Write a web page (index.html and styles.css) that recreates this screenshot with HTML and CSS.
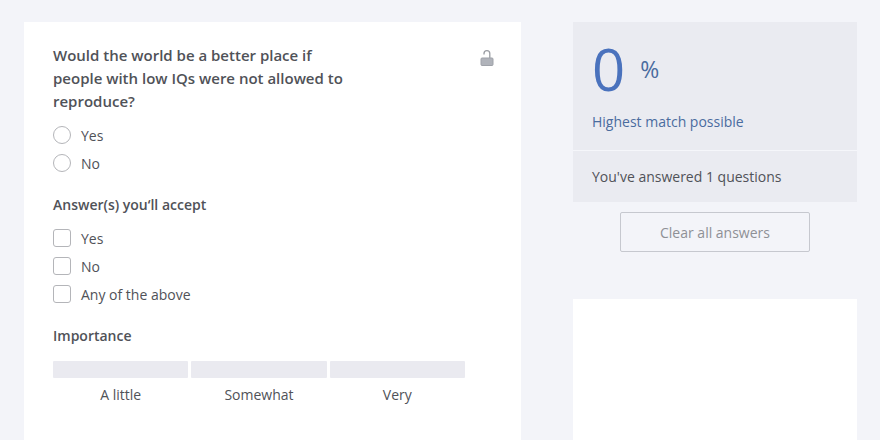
FILE: index.html
```html
<!DOCTYPE html>
<html lang="en">
<head>
    <meta charset="UTF-8">
    <meta name="viewport" content="width=device-width, initial-scale=1.0">
    <title>Questions</title>
    <link rel="stylesheet" href="styles.css">
</head>
<body>
    <div class="page">
        <form class="question-card">
            <div class="question-body">
                <fieldset>
                    <legend class="question-text">Would the world be a better place if people with low IQs were not allowed to reproduce?</legend>
                    <label class="option"><input type="radio" name="answer" value="yes">Yes</label>
                    <label class="option"><input type="radio" name="answer" value="no">No</label>
                </fieldset>

                <fieldset>
                    <legend>Answer(s) you‘ll accept</legend>
                    <label class="option"><input type="checkbox" name="accept" value="yes">Yes</label>
                    <label class="option"><input type="checkbox" name="accept" value="no">No</label>
                    <label class="option"><input type="checkbox" name="accept" value="any">Any of the above</label>
                </fieldset>

                <fieldset>
                    <legend>Importance</legend>
                    <div class="importance">
                        <label class="level"><input type="radio" name="importance" value="little">A little</label>
                        <label class="level"><input type="radio" name="importance" value="somewhat">Somewhat</label>
                        <label class="level"><input type="radio" name="importance" value="very">Very</label>
                    </div>
                </fieldset>
            </div>

            <button type="button" class="lock" aria-label="Answer publicly">
                <svg width="14" height="18" viewBox="0 0 14 18">
                    <path d="M4 5.500V4.500a2.800 2.800 0 0 1 5.800 0V9" fill="none" stroke="#9a9da3" stroke-width="1.300"/>
                    <rect x="1" y="9" width="12" height="7.500" rx="1" fill="#b0b3ba" stroke="#9fa2a9"/>
                </svg>
            </button>
        </form>

        <aside class="sidebar">
            <section class="match-card">
                <div class="match">
                    <div class="score"><span class="score-number">0</span><span class="score-percent">%</span></div>
                    <p class="match-label">Highest match possible</p>
                </div>
                <p class="answered">You've answered 1 questions</p>
            </section>
            <button type="button" class="clear-button">Clear all answers</button>
            <section class="panel"></section>
        </aside>
    </div>
</body>
</html>
```
FILE: styles.css
```css
* {
    box-sizing: border-box;
}

body {
    margin: 0;
    background-color: #f3f4f9;
    color: #505258;
    font-family: "Open Sans", sans-serif;
    font-size: 14px;
    line-height: 23px;
}

p {
    margin: 0;
}

.page {
    display: grid;
    grid-template-columns: 7fr 4fr;
    gap: 52px;
    min-height: 100vh;
    padding: 22px 23px 0 24px;
}

.question-card {
    display: flex;
    gap: 15px;
    padding: 22px 27px 24px 29px;
    background: #fff;
}

.question-body {
    flex: 1;
}

fieldset {
    margin: 0 0 16px;
    padding: 0;
    border: none;
}

legend {
    margin-bottom: 8px;
    padding: 0;
    font-weight: 600;
}

.question-text {
    max-width: 300px;
    font-size: 15px;
}

.option {
    display: flex;
    align-items: center;
    gap: 10px;
    height: 28px;
}

.option input {
    appearance: none;
    width: 18px;
    height: 18px;
    margin: 0;
    border: 1px solid #b4b5b9;
    border-radius: 3px;
    background: #fff;
}

.option input[type="radio"] {
    border-radius: 50%;
}

.option input:checked {
    background: #4a72bd;
}

.importance {
    display: grid;
    grid-template-columns: repeat(3, 1fr);
    gap: 3px;
    padding-top: 6px;
}

.level {
    text-align: center;
}

.level input {
    appearance: none;
    display: block;
    width: 100%;
    height: 17px;
    margin: 0 0 5px;
    border-radius: 1px;
    background: #eaeaf0;
}

.level input:checked {
    background: #4a72bd;
}

button {
    font-family: inherit;
    cursor: pointer;
}

.lock {
    align-self: flex-start;
    margin-top: 5px;
    padding: 0;
    border: none;
    background: none;
    line-height: 0;
}

.sidebar {
    display: flex;
    flex-direction: column;
}

.match-card {
    background: #eaebf1;
}

.match {
    padding: 17px 19px;
    border-bottom: 1px solid #f5f6fa;
    color: #4a6c9f;
}

.score {
    display: flex;
    align-items: center;
    gap: 15px;
    height: 60px;
    margin-bottom: 11px;
}

.score-number {
    color: #4a72bd;
    font-size: 58px;
    line-height: 60px;
}

.score-percent {
    font-size: 23px;
}

.answered {
    padding: 14px 19px;
}

.clear-button {
    align-self: center;
    width: 67%;
    height: 40px;
    margin: 10px 0 47px;
    border: 1px solid #c6c8cf;
    border-radius: 2px;
    background: transparent;
    color: #8e9096;
    font-size: 14px;
}

.panel {
    flex: 1;
    background: #fff;
}
```
